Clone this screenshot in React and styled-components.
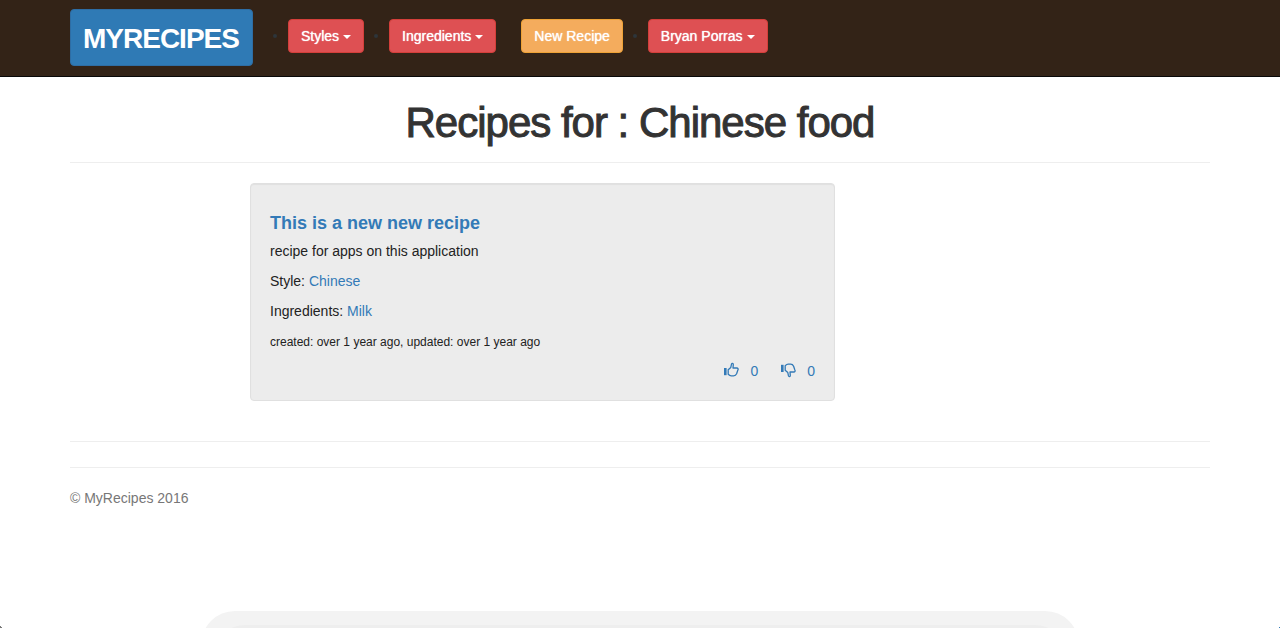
import React from 'react';
import styled, { createGlobalStyle, css } from 'styled-components';

const GlobalStyle = createGlobalStyle`
  *, *::before, *::after { box-sizing: border-box; }
  body {
    margin: 0;
    background: #fff;
    color: #333;
    font-family: "Liberation Sans", Arial, sans-serif;
    font-size: 14px;
    line-height: 20px;
  }
  a { color: #337ab7; text-decoration: none; }
`;

const Container = styled.div`
  max-width: 1170px;
  margin: 0 auto;
  padding: 0 15px;
`;

const Header = styled.header`
  background: #332317;
  border-bottom: 1px solid #090909;
`;

const HeaderBar = styled(Container)`
  display: flex;
  align-items: flex-start;
  gap: 35px;
  padding-top: 9px;
  padding-bottom: 10px;
`;

const buttonFace = css`
  border: 1px solid;
  border-radius: 4px;
  color: #fff;
  font-family: inherit;
  white-space: nowrap;
`;

const Logo = styled.a`
  ${buttonFace}
  padding: 14px 13px 12px 12px;
  background: #2f7ab5;
  border-color: #2e6da4;
  color: #fff;
  font-size: 28px;
  font-weight: bold;
  line-height: 29px;
  letter-spacing: -1px;
`;

const NavList = styled.ul`
  display: flex;
  gap: 25px;
  margin: 0;
  padding: 10px 0 0;
  list-style: none;
`;

const NavItem = styled.li`
  position: relative;
  display: flex;

  &::before {
    content: "";
    display: ${(p) => (p.$dotted ? 'block' : 'none')};
    position: absolute;
    left: -15px;
    top: 15px;
    width: 4px;
    height: 4px;
    border-radius: 50%;
    background: #2e353a;
  }
`;

const NavButton = styled.button`
  ${buttonFace}
  display: flex;
  align-items: center;
  gap: 4px;
  padding: 6px 12px;
  background: ${(p) => (p.$tone === 'warning' ? '#f4ac5d' : '#de5053')};
  border-color: ${(p) => (p.$tone === 'warning' ? '#eea236' : '#d43f3a')};
  font-size: 14px;
  line-height: 20px;
  text-shadow: 0 0 1px #fff;
  cursor: pointer;
`;

const Caret = styled.span`
  margin-top: 2px;
  border-top: 4px solid;
  border-right: 4px solid transparent;
  border-left: 4px solid transparent;
`;

const Title = styled.h1`
  margin: 0;
  padding: 23px 0 17px;
  font-size: 42px;
  font-weight: normal;
  line-height: 45px;
  letter-spacing: -1px;
  text-align: center;
  -webkit-text-stroke: 1px #333;
`;

const Rule = styled.hr`
  margin: 0;
  border: 0;
  border-top: 1px solid #eee;
`;

const Row = styled.div`
  margin: 20px -15px 40px;
`;

const Card = styled.article`
  width: 50%;
  margin-left: 16.6667%;
  padding: 29px 19px 19px;
  border: 1px solid #e0e0e0;
  border-radius: 4px;
  background: #ececec;
  box-shadow: inset 0 1px 1px rgba(0, 0, 0, 0.05);
`;

const RecipeName = styled.h2`
  margin: 0 0 8px;
  font-size: 18px;
  line-height: 20px;
`;

const Line = styled.p`
  margin: 0 0 10px;
  color: #222;
`;

const Meta = styled.small`
  display: block;
  margin: 11px 0 9px;
  color: #222;
  font-size: 12px;
  line-height: 20px;
`;

const Votes = styled.div`
  display: flex;
  justify-content: flex-end;
  gap: 22px;
`;

const Vote = styled.a`
  display: flex;
  align-items: center;
  gap: 11px;
`;

const ThumbIcon = styled.svg`
  width: 16px;
  height: 16px;
  margin-top: -3px;
  fill: none;
  stroke: currentColor;
  stroke-linejoin: round;
`;

const Footer = styled.footer`
  margin-top: 25px;
  padding-top: 20px;
  border-top: 1px solid #eee;
  color: #777;
`;

const Dock = styled.div`
  position: fixed;
  bottom: 0;
  left: 50%;
  width: 878px;
  max-width: 100%;
  height: 17px;
  overflow: hidden;
  transform: translateX(-50%);

  &::before,
  &::after {
    content: "";
    position: absolute;
    top: 0;
    left: 0;
    right: 0;
    height: 80px;
    border-radius: 34px;
    background: #f3f3f3;
  }
  &::after {
    top: 14px;
    left: 14px;
    right: 14px;
    border-radius: 30px;
    background: #eee;
  }
`;

const Corner = styled.span`
  position: fixed;
  bottom: 0;
  ${(p) => p.$side}: 0;
  width: 2px;
  height: 2px;
  background: linear-gradient(
    to top ${(p) => (p.$side === 'left' ? 'right' : 'left')},
    ${(p) => (p.$side === 'left' ? '#777' : '#337ab7')} 50%,
    transparent 50%
  );
`;

function ThumbUp() {
  return (
    <ThumbIcon viewBox="0 0 16 16" aria-hidden="true">
      <path d="M1 6h2.6v7.2H1z" fill="currentColor" stroke="none" />
      <path d="M5.2 7.8 7.8 5.4 8.5 2.1C8.8 1.1 10.3 1.2 10.3 2.6L10 6H13.7C15.2 6 15.4 7.4 14.8 8.2L13.6 11.8C13 13.2 12.2 13.9 10.6 13.9H8.2C6.8 13.9 6 13.1 5.2 12.3Z" strokeWidth="1.3" />
    </ThumbIcon>
  );
}

function ThumbDown() {
  return (
    <ThumbIcon viewBox="0 0 16 16" aria-hidden="true">
      <path d="M1 2.8h2.6V10H1z" fill="currentColor" stroke="none" />
      <path d="M5.2 8.2 7.8 10.6 8.5 13.9C8.8 14.9 10.3 14.8 10.3 13.4L10 10H13.7C15.2 10 15.4 8.6 14.8 7.8L13.6 4.2C13 2.8 12.2 2.1 10.6 2.1H8.2C6.8 2.1 6 2.9 5.2 3.7Z" strokeWidth="1.3" />
    </ThumbIcon>
  );
}

const navItems = [
  { label: 'Styles', menu: true },
  { label: 'Ingredients', menu: true },
  { label: 'New Recipe', tone: 'warning' },
  { label: 'Bryan Porras', menu: true },
];

export default function App() {
  return (
    <>
      <GlobalStyle />
      <Header>
        <HeaderBar>
          <Logo href="#home">MYRECIPES</Logo>
          <nav>
            <NavList>
              {navItems.map(({ label, menu, tone }) => (
                <NavItem key={label} $dotted={menu}>
                  <NavButton type="button" $tone={tone}>
                    {label}
                    {menu && <Caret />}
                  </NavButton>
                </NavItem>
              ))}
            </NavList>
          </nav>
        </HeaderBar>
      </Header>
      <Container as="main">
        <Title>Recipes for : Chinese food</Title>
        <Rule />
        <Row>
          <Card>
            <RecipeName><a href="#recipe">This is a new new recipe</a></RecipeName>
            <Line>recipe for apps on this application</Line>
            <Line>Style: <a href="#chinese">Chinese</a></Line>
            <Line>Ingredients: <a href="#milk">Milk</a></Line>
            <Meta>created: over 1 year ago, updated: over 1 year ago</Meta>
            <Votes>
              <Vote href="#like" aria-label="Like: 0"><ThumbUp />0</Vote>
              <Vote href="#dislike" aria-label="Dislike: 0"><ThumbDown />0</Vote>
            </Votes>
          </Card>
        </Row>
        <Rule />
        <Footer>© MyRecipes 2016</Footer>
      </Container>
      <Dock />
      <Corner $side="left" />
      <Corner $side="right" />
    </>
  );
}
